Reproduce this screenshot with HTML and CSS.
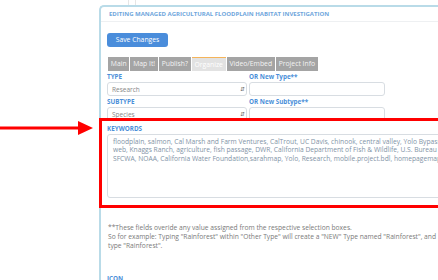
FILE: index.html
```html
<!DOCTYPE html>
<html>
<head>
<meta charset="utf-8">
<link rel="stylesheet" href="styles.css">
</head>
<body>
<div class="backdrop">
  <div class="bg-line bg-line-a"></div>
  <div class="bg-line bg-line-b"></div>
</div>
<div class="modal">
  <div class="modal-header">EDITING MANAGED AGRICULTURAL FLOODPLAIN HABITAT INVESTIGATION</div>
  <div class="modal-body">
    <button class="btn-save">Save Changes</button>
    <div class="tabs">
      <span class="tab">Main</span>
      <span class="tab">Map It!</span>
      <span class="tab">Publish?</span>
      <span class="tab active">Organize</span>
      <span class="tab">Video/Embed</span>
      <span class="tab">Project Info</span>
    </div>
    <div class="row">
      <div class="col">
        <div class="label">TYPE</div>
        <div class="select"><span>Research</span><span class="arrows">&#8693;</span></div>
      </div>
      <div class="col col2">
        <div class="label">OR New Type**</div>
        <div class="input"></div>
      </div>
    </div>
    <div class="row">
      <div class="col">
        <div class="label">SUBTYPE</div>
        <div class="select"><span>Species</span><span class="arrows">&#8693;</span></div>
      </div>
      <div class="col col2">
        <div class="label">OR New Subtype**</div>
        <div class="input"></div>
      </div>
    </div>
    <div class="label kw-label">KEYWORDS</div>
    <div class="textarea"><span class="kw-line">floodplain, salmon, Cal Marsh and Farm Ventures, CalTrout, UC Davis, chinook, central valley, Yolo Bypass, food</span><span class="kw-line">web, Knaggs Ranch, agriculture, fish passage, DWR, California Department of Fish &amp; Wildlife, U.S. Bureau of Reclamation,</span><span class="kw-line">SFCWA, NOAA, California Water Foundation,sarahmap, Yolo, Research, mobile.project.bdl, homepagemap</span></div>
    <p class="note">**These fields overide any value assigned from the respective selection boxes.<br>So for example: Typing "Rainforest" within "Other Type" will create a "NEW" Type named "Rainforest", and<br>type "Rainforest".</p>
    <div class="label icon-label">ICON</div>
  </div>
</div>
<div class="annot-box"></div>
<div class="annot-arrow">
  <svg width="94" height="16" viewBox="0 0 94 16"><rect x="0" y="6.5" width="80" height="3" fill="#f00"/><polygon points="78,1 93,8 78,15" fill="#f00"/></svg>
</div>
</body>
</html>
```
FILE: styles.css
```css
html, body {
  margin: 0;
  padding: 0;
  background: #fff;
  overflow: hidden;
  width: 438px;
  height: 280px;
  font-family: "Open Sans", "Liberation Sans", sans-serif;
}
.backdrop {
  position: absolute;
  left: 0;
  top: 0;
  width: 438px;
  height: 5px;
}
.bg-line {
  position: absolute;
  top: 0;
  width: 1px;
  height: 5px;
  background: #e6e6e6;
}
.bg-line-a { left: 128px; }
.bg-line-b { left: 135px; }
.modal {
  margin: 5px 0 0 99px;
  border: 2px solid #b9dbe8;
  border-right: none;
  border-bottom: none;
  border-top-left-radius: 5px;
  width: 420px;
  height: 300px;
  background: #fff;
  overflow: hidden;
}
.modal-header {
  height: 14px;
  line-height: 14px;
  padding-left: 8px;
  font-size: 6px;
  font-weight: 700;
  color: #6ea6dc;
  white-space: nowrap;
  border-bottom: 1px solid #eef0f2;
}
.modal-body {
  padding: 11px 0 0 6px;
}
.btn-save {
  display: block;
  width: 61px;
  height: 14px;
  padding: 0;
  border: none;
  border-radius: 3px;
  background: #4a8ddb;
  color: #fff;
  font-family: inherit;
  font-size: 6.8px;
  line-height: 14px;
}
.tabs {
  display: flex;
  margin-top: 10px;
  height: 14px;
  gap: 1px;
  margin-left: 1px;
}
.tab {
  background: #a4a4a4;
  color: #f3f3f3;
  font-size: 6.8px;
  line-height: 14px;
  padding: 0 2.8px;
  white-space: nowrap;
}
.tab.active {
  background: #e2e2e2;
  color: #fff;
  border-top: 1px solid #f5b45a;
  line-height: 13px;
}
.row {
  display: flex;
  gap: 2px;
}
.col {
  width: 140px;
}
.col2 {
  width: 136px;
}
.label {
  font-size: 6.3px;
  font-weight: 700;
  color: #4b8fd9;
  height: 11px;
  line-height: 11px;
  white-space: nowrap;
}
.select, .input {
  box-sizing: border-box;
  height: 14px;
  border: 1px solid #d8dde2;
  border-radius: 3px;
  display: flex;
  align-items: center;
  justify-content: space-between;
  padding: 0 1px 0 4px;
  font-size: 6.5px;
  color: #888;
}
.arrows {
  font-size: 6px;
  color: #666;
}
.kw-label {
  margin-top: 2px;
  height: 11px;
}
.textarea {
  box-sizing: border-box;
  width: 420px;
  height: 64px;
  border: 1px solid #d8dde2;
  border-radius: 3px;
  padding: 3px 5px;
  font-size: 6.7px;
  line-height: 8.4px;
  color: #7f93a6;
  overflow: hidden;
}
.kw-line {
  display: block;
  white-space: nowrap;
}
.note {
  margin: 25px 0 0 1px;
  font-size: 6.7px;
  line-height: 9px;
  color: #7a7a7a;
  white-space: nowrap;
}
.icon-label {
  margin-top: 23px;
}
.annot-box {
  position: absolute;
  left: 99px;
  top: 118px;
  width: 400px;
  height: 84px;
  border: 3px solid #f00;
}
.annot-arrow {
  position: absolute;
  left: 0;
  top: 120px;
  line-height: 0;
}
```
